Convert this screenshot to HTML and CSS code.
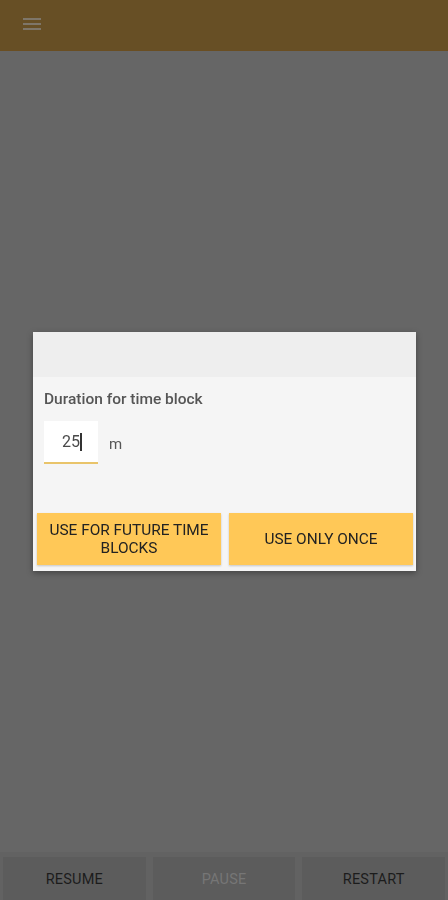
FILE: index.html
```html
<!DOCTYPE html>
<html>
<head>
<meta charset="utf-8">
<link rel="stylesheet" href="styles.css">
</head>
<body>
<div class="app">
  <header class="topbar">
    <svg class="menu" width="18" height="14" viewBox="0 0 18 14">
      <rect x="0" y="1" width="18" height="2" fill="#84807a"/>
      <rect x="0" y="6" width="18" height="2" fill="#84807a"/>
      <rect x="0" y="11" width="18" height="2" fill="#84807a"/>
    </svg>
  </header>
  <main class="content"></main>
  <footer class="controls">
    <div class="ctl">RESUME</div>
    <div class="ctl disabled">PAUSE</div>
    <div class="ctl">RESTART</div>
  </footer>
</div>
<div class="overlay">
  <div class="dialog">
    <div class="dlg-head"></div>
    <div class="dlg-body">
      <div class="label">Duration for time block</div>
      <div class="row">
        <div class="input"><span class="val">25</span><span class="caret"></span></div>
        <span class="unit">m</span>
      </div>
    </div>
    <div class="actions">
      <div class="btn">USE FOR FUTURE TIME BLOCKS</div>
      <div class="btn">USE ONLY ONCE</div>
    </div>
  </div>
</div>
</body>
</html>
```
FILE: styles.css
```css
html, body {
  margin: 0;
  padding: 0;
  height: 100%;
}
body {
  font-family: Roboto, "Liberation Sans", sans-serif;
  background: #666666;
}
.app {
  display: flex;
  flex-direction: column;
  height: 900px;
}
.topbar {
  height: 51px;
  background: #674f25;
  border-bottom: 1px solid #6a4e22;
  display: flex;
  align-items: center;
  padding-left: 23px;
  box-sizing: border-box;
}
.menu {
  margin-top: -2px;
  opacity: 0.8;
}
.content {
  flex: 1;
}
.controls {
  height: 48px;
  background: #626262;
  display: flex;
  gap: 7px;
  padding: 5px 3px 0 3px;
  box-sizing: border-box;
}
.ctl {
  flex: 1;
  background: #5c5c5c;
  display: flex;
  align-items: center;
  justify-content: center;
  font-size: 14.5px;
  color: #1c1c1c;
  letter-spacing: 0.2px;
  padding-top: 2px;
}
.ctl.disabled {
  color: #767676;
}
.overlay {
  position: fixed;
  inset: 0;
  display: flex;
  align-items: flex-start;
  justify-content: flex-start;
  padding: 332px 0 0 33px;
  box-sizing: border-box;
}
.dialog {
  width: 383px;
  background: #f5f5f5;
  box-shadow: 0 2px 6px rgba(0,0,0,0.35);
}
.dlg-head {
  height: 45px;
  background: #eeeeee;
}
.dlg-body {
  padding: 14px 11px 0 11px;
  height: 136px;
  box-sizing: border-box;
}
.label {
  font-size: 15.5px;
  font-weight: 500;
  color: #555555;
  line-height: 16px;
}
.row {
  display: flex;
  align-items: center;
  margin-top: 14px;
}
.input {
  width: 54px;
  height: 43px;
  background: #ffffff;
  border-bottom: 2px solid #e9c46a;
  box-sizing: border-box;
  display: flex;
  align-items: center;
  justify-content: center;
  font-size: 16px;
  color: #4a4a4a;
}
.val {
  margin-left: 2px;
}
.caret {
  display: inline-block;
  width: 2px;
  height: 18px;
  background: #333;
}
.unit {
  margin-left: 11px;
  font-size: 15px;
  color: #555;
  margin-top: 2px;
}
.actions {
  display: flex;
  gap: 8px;
  padding: 0 3px 6px 4px;
}
.btn {
  flex: 1;
  height: 52px;
  background: #ffc857;
  box-shadow: 0 1px 2px rgba(0,0,0,0.2);
  display: flex;
  align-items: center;
  justify-content: center;
  text-align: center;
  font-size: 15.4px;
  line-height: 18px;
  color: #222;
  padding: 0 6px;
}
```
